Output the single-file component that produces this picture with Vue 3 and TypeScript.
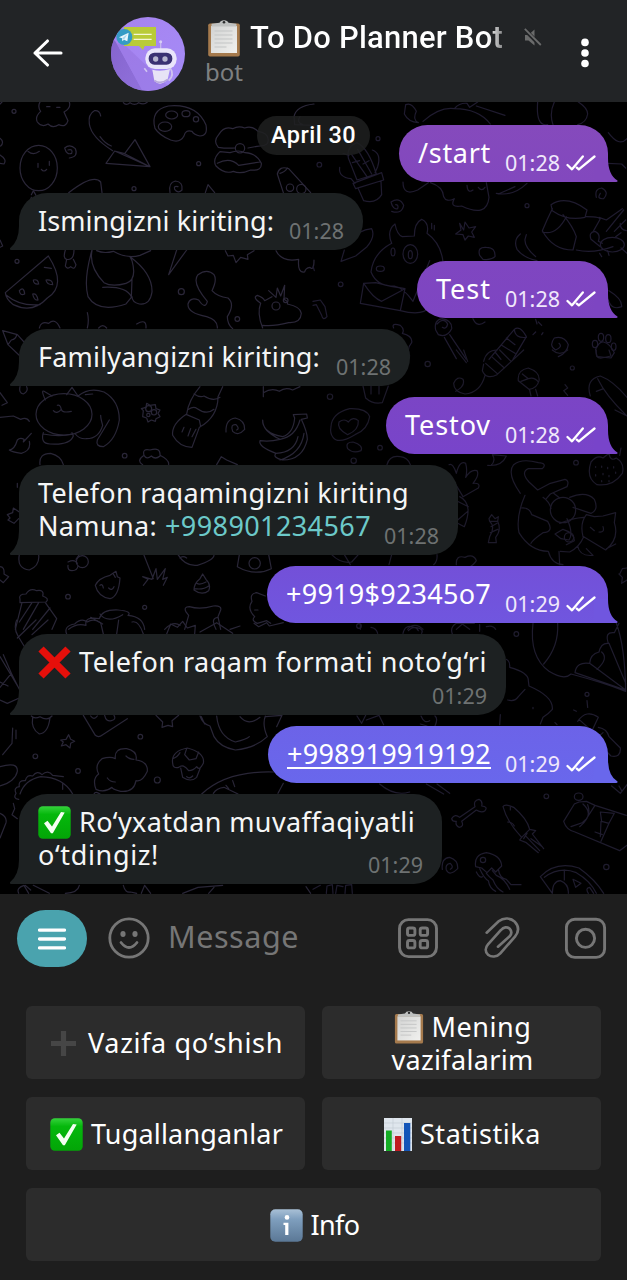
<script setup lang="ts">
type IconName = 'cross' | 'check' | 'clipboard' | 'chart' | 'info' | 'plus'
interface Segment { icon?: IconName; text?: string; w?: number; kind?: 'link' | 'underline' }
interface Message { out: boolean; width: number; height: number; time: string; lines: Segment[][]; fill?: [string, string] }
interface Key { wide?: boolean; lines: Segment[][] }

const messages: Message[] = [
  { out: true, width: 209, height: 57, time: '01:28', fill: ['#854abc', '#8248be'], lines: [[{ text: '/start', w: 73 }]] },
  { out: false, width: 344, height: 57, time: '01:28', lines: [[{ text: 'Ismingizni kiriting:', w: 236 }]] },
  { out: true, width: 191, height: 57, time: '01:28', fill: ['#7f46c0', '#7d45c2'], lines: [[{ text: 'Test', w: 55 }]] },
  { out: false, width: 391, height: 57, time: '01:28', lines: [[{ text: 'Familyangizni kiriting:', w: 282 }]] },
  { out: true, width: 222, height: 57, time: '01:28', fill: ['#7b45c5', '#7844ca'], lines: [[{ text: 'Testov', w: 86 }]] },
  {
    out: false, width: 439, height: 90, time: '01:28',
    lines: [[{ text: 'Telefon raqamingizni kiriting', w: 371 }], [{ text: 'Namuna:', w: 119 }, { text: '+998901234567', w: 206, kind: 'link' }]],
  },
  { out: true, width: 341, height: 57, time: '01:29', fill: ['#7350d8', '#7056df'], lines: [[{ text: '+9919$92345o7', w: 205 }]] },
  { out: false, width: 487, height: 81, time: '01:29', lines: [[{ icon: 'cross' }, { text: 'Telefon raqam formati noto‘g‘ri', w: 408 }]] },
  { out: true, width: 340, height: 57, time: '01:29', fill: ['#6c63e8', '#6967ec'], lines: [[{ text: '+998919919192', w: 204, kind: 'underline' }]] },
  {
    out: false, width: 423, height: 90, time: '01:29',
    lines: [[{ icon: 'check' }, { text: 'Ro‘yxatdan muvaffaqiyatli', w: 336 }], [{ text: 'o‘tdingiz!', w: 121 }]],
  },
]

const keys: Key[] = [
  { lines: [[{ icon: 'plus' }, { text: 'Vazifa qo‘shish', w: 195 }]] },
  { lines: [[{ icon: 'clipboard' }, { text: 'Mening', w: 100 }], [{ text: 'vazifalarim', w: 142 }]] },
  { lines: [[{ icon: 'check' }, { text: 'Tugallanganlar', w: 192 }]] },
  { lines: [[{ icon: 'chart' }, { text: 'Statistika', w: 121 }]] },
  { wide: true, lines: [[{ icon: 'info' }, { text: 'Info', w: 49 }]] },
]

// Spreads the letters of a label evenly so that it fills the given width.
const vFit = {
  mounted(el: HTMLElement, binding: { value?: number }) {
    if (!binding.value) return
    const natural = el.getBoundingClientRect().width
    const count = (el.textContent ?? '').trim().length
    el.style.letterSpacing = `${(binding.value - natural) / count}px`
  },
}
</script>

<template>
  <div class="screen">
    <svg class="defs" width="0" height="0">
      <defs>
        <linearGradient id="green" x1="0" y1="0" x2="0" y2="1"><stop offset="0" stop-color="#35d23c" /><stop offset=".25" stop-color="#05b80c" /><stop offset="1" stop-color="#03a507" /></linearGradient>
        <linearGradient id="blue" x1="0" y1="0" x2="0" y2="1"><stop offset="0" stop-color="#a9c0d6" /><stop offset=".3" stop-color="#7f9fbe" /><stop offset="1" stop-color="#5b7896" /></linearGradient>
        <linearGradient id="violet" x1="0" y1="0" x2="1" y2="1"><stop offset="0" stop-color="#a783ee" /><stop offset="1" stop-color="#a48bf8" /></linearGradient>
        <linearGradient id="shade" x1="0" y1="0" x2="1" y2="1"><stop offset="0" stop-color="#7c5cc4" /><stop offset="1" stop-color="#8c6bd6" /></linearGradient>
        <linearGradient id="paper" x1="0" y1="0" x2="1" y2="1"><stop offset="0" stop-color="#d2d3d2" /><stop offset="1" stop-color="#f1f1ef" /></linearGradient>
        <symbol id="cross" viewBox="0 0 33 33"><path d="M3 3 30 30M30 3 3 30" stroke="#e60f0a" stroke-width="7.4" fill="none" /></symbol>
        <symbol id="check" viewBox="0 0 33 33"><rect x=".3" y=".3" width="32.4" height="32.4" rx="4.5" fill="url(#green)" /><path d="M6 17.3 9.5 14.8 14 20.5 23 6 26.7 6.5 14.8 27.2 13 27.2Z" fill="#f4fff2" /></symbol>
        <symbol id="clipboard" viewBox="0 0 33 37">
          <rect x=".7" y="3.5" width="31.6" height="33" rx="1.8" fill="#a57a4d" /><rect x="3.5" y="6" width="26" height="27" fill="url(#paper)" />
          <path d="M4 3.8 12 2.8Q13 .2 16.5.2T21 2.8L29 3.8V6.5H4Z" fill="#bfc1c0" /><circle cx="16.5" cy="2.2" r="1.3" fill="#2b2c2c" />
          <path d="M7 11H25M7 15H25M7 19H25M7 23H25M7 27H19" stroke="#c3c5c5" stroke-width="1" />
        </symbol>
        <symbol id="chart" viewBox="0 0 28 33"><path d="M0 0H28V33H0Z" fill="#dfe6ed" /><path d="M0 5H28M0 10H28M0 15H28M0 20H28M0 25H28M9 0V33M18 0V33" stroke="#c4ccd6" stroke-width=".7" /><path d="M2 12.5H7.8V33H2Z" fill="#14ad25" /><path d="M11 18H17.2V33H11Z" fill="#c01a20" /><path d="M20 5H26.3V33H20Z" fill="#1355b8" /></symbol>
        <symbol id="info" viewBox="0 0 33 33"><rect x=".3" y=".3" width="32.4" height="32.4" rx="5" fill="url(#blue)" /><circle cx="17" cy="8.4" r="2.3" fill="#fff" /><path d="M13.5 13.7H18.4V26H15.2V16H13.5Z" fill="#fff" /></symbol>
        <symbol id="plus" viewBox="0 0 27 27"><path d="M13.5 1V26M1 13.5H26" stroke="#464646" stroke-width="5.2" fill="none" /></symbol>
      </defs>
    </svg>

    <header class="top">
      <svg class="back" width="32" height="30" viewBox="0 0 32 30"><path d="M29 15H3M15.5 3 3 15 15.5 27" fill="none" stroke="#fff" stroke-width="3.1" stroke-linecap="round" stroke-linejoin="round" /></svg>
      <svg class="avatar" width="74" height="74" viewBox="333 51 222 222">
        <clipPath id="round"><circle cx="444" cy="162" r="111" /></clipPath>
        <g clip-path="url(#round)">
          <path d="M333 51H555V273H333Z" fill="url(#violet)" />
          <path d="M347 125 428 273H333V110Z" fill="url(#shade)" opacity=".8" />
          <path d="M350 130 375 136 520 273H428Z" fill="#9673df" opacity=".55" />
          <path d="M372 81H468V138H434L429 150 417 138H372Z" fill="#b9cb38" />
          <path d="M401 103H455M401 118H455" stroke="#f5f8d6" stroke-width="4" />
          <circle cx="373" cy="111" r="24" fill="#359bc5" /><path d="M357 112 386 98 382 124 372 119 367 124 366 115Z" fill="#e8f6fd" /><path d="m366 115 16-12-10 16z" fill="#a9d6ec" />
          <path d="M482 125V148" stroke="#c6b9ee" stroke-width="4" /><circle cx="482" cy="125" r="4.5" fill="#d8cff5" />
          <path d="M441 215 433 205M510 203Q525 224 506 242" stroke="#cfc4f0" stroke-width="5" fill="none" />
          <rect x="436" y="145" width="94" height="62" rx="29" fill="#e9e5fa" /><rect x="446" y="158" width="71" height="36" rx="17" fill="#3a3173" />
          <circle cx="467" cy="177" r="8" fill="#b6b5cf" /><circle cx="495" cy="177" r="8" fill="#b6b5cf" />
          <path d="M457 209Q482 216 510 207L503 238Q482 261 463 243Z" fill="#e7e3f6" /><path d="M463 241Q482 255 503 238" fill="none" stroke="#b6a7db" stroke-width="5" />
        </g>
      </svg>
      <div class="who">
        <div class="title">
          <svg class="board" width="34" height="37"><use href="#clipboard" /></svg>
          <span v-fit="253" class="name">To Do Planner Bot</span>
        </div>
        <div class="sub">bot</div>
      </div>
      <svg class="mute" width="18" height="20" viewBox="0 0 18 20"><path d="M1 7H4.5L10.5 1.5V17.5L4.5 12.5H1Z" fill="#6a6b6b" /><path d="M.7 1.5 17 18" stroke="#222426" stroke-width="4" /><path d="M.8.8 16.8 17" stroke="#6a6b6b" stroke-width="1.8" /></svg>
      <svg class="more" width="10" height="32" viewBox="0 0 10 32"><g fill="#fff"><circle cx="5" cy="5.4" r="3.8" /><circle cx="5" cy="16" r="3.8" /><circle cx="5" cy="26.5" r="3.8" /></g></svg>
    </header>

    <main class="chat">
      <svg class="doodles" viewBox="0 102 627 792" width="627" height="792">
        <g transform="translate(0 100) scale(.33333)" stroke="#2b2739">
          <path d="M120 6Q112 20 122 34 104 50 112 66 126 84 144 72 158 86 176 74 198 84 204 62 196 46 192 36 214 24 208 6M140 20h10M170 22h10" />
          <circle cx="42" cy="34" r="6" /><circle cx="402" cy="266" r="6" /><circle cx="596" cy="191" r="6" /><circle cx="51" cy="484" r="6" /><circle cx="544" cy="575" r="9" /><circle cx="712" cy="657" r="7" />
          <path d="M302 48Q300 30 283 32 264 42 268 72 274 112 338 152M300 110Q316 132 334 138M318 190 344 153 374 161 405 119 450 200ZM344 153 450 200M374 161 450 200" />
          <path d="M465 85Q450 30 505 18 590 10 618 75 624 108 600 108 582 104 576 94 556 88 552 108 540 130 512 120 478 106 465 85Z" /><ellipse cx="515" cy="45" rx="18" ry="12" /><ellipse cx="558" cy="41" rx="12" ry="9" /><ellipse cx="495" cy="80" rx="20" ry="14" /><circle cx="588" cy="58" r="8" />
          <path d="M655 142Q638 124 656 104 672 76 698 86 716 76 734 84 756 76 774 94 802 98 804 116 808 138 780 138 762 140 744 144M655 142Q680 146 705 144M660 155Q636 178 648 198 674 224 700 214 722 224 752 210 786 214 784 190 770 160 735 158 716 148 690 158ZM652 190Q690 170 716 196 754 190 780 186" /><circle cx="720" cy="145" r="14" />
          <ellipse cx="116" cy="204" rx="56" ry="68" /><path d="M84 154Q100 168 118 154M114 190v12M148 184v12M124 208Q132 218 140 208M94 284 100 272 108 286M94 292Q84 320 92 340" />
          <path d="M194 144Q200 166 215 160 220 146 204 150M194 144Q210 130 226 146 236 170 208 174M206 278Q280 220 302 246L306 278M510 278Q504 248 526 243 550 246 546 270 534 282 524 268 520 256 534 260M616 278 624 254 644 278" />
          <path d="M832 222Q838 196 866 206L932 278M832 222 850 278M840 220Q855 216 862 204" /><circle cx="870" cy="263" r="11" /><circle cx="904" cy="267" r="14" /><path d="M942 12Q888 18 882 50L884 74 942 76M900 50Q888 66 908 74" />
          <path d="M0 115Q14 126 2 138M0 165Q22 178 12 192L0 190M0 420 8 438 0 442M0 12 6 6M370 8Q378 18 390 8 404 18 416 8 432 16 442 6" />
          <path d="M16 578 145 468Q202 556 142 594 98 642 40 614 18 598 16 578ZM18 585Q60 620 120 614M133 502 154 505M58 572q14-14 16 10-14 6-16-10ZM100 540q14-4 16 12-16 2-16-12ZM98 582q12-4 16 18-12 2-16-18ZM138 540q20-2 20 14-18 0-20-14Z" />
          <path d="M196 450Q188 476 200 478 222 482 222 450M200 478 196 498Q202 510 212 500 224 512 228 494L220 478M276 450Q250 540 264 590 294 640 378 612L394 592 396 538M276 452Q266 500 312 548 336 562 378 550 412 540 396 482L390 470Q458 520 456 576 450 616 418 612 396 606 396 590M308 562Q378 558 394 590M290 452Q312 462 340 454 382 478 420 466L452 452" />
          <path d="M530 450 506 524 560 450M676 452 684 468 700 466 708 488 722 472 744 478 742 464 762 452M828 452Q846 488 896 478 892 520 914 516 916 504 930 502 942 514 942 480M652 684Q654 660 620 650 562 640 564 612 570 590 596 600 616 630 622 604 574 548 594 524 622 504 642 524 652 540 636 572 652 590 684 594 706 612 682 650 682 672 698 686" />
          <path d="M788 684Q770 640 782 610 756 592 772 586 790 592 794 602L816 590M806 572 828 592 832 564 842 588 854 556 852 598Q866 604 862 612 902 620 904 640 902 670 866 668 820 680 788 676" /><circle cx="828" cy="618" r="12" /><circle cx="857" cy="601" r="7" />
          <path d="M8 692 52 704 94 750M8 692 24 734 60 768M50 704Q48 718 34 720L24 734M118 684Q122 662 146 670 166 652 180 684M262 638Q268 660 262 684M296 684q12-14 24 0M410 672Q440 654 438 684" />
        </g>
        <g transform="translate(313 100) scale(.33333)" stroke="#1f1b2f">
          <path d="M278 14Q296 6 310 34 298 60 316 68 286 66 274 42ZM330 64Q380 20 424 26 496 26 532 72M426 24Q440 8 462 10L470 22 494 6M490 18 576 46M674 6Q668 80 704 74M796 6Q824 24 824 42 820 68 794 74M724 6Q708 40 720 74" />
          <path d="M270 246Q270 290 314 270L346 248M352 248Q390 260 392 290 400 308 424 296 408 324 446 318 522 354 528 292L520 248M462 256Q464 282 480 270M496 262Q506 276 516 262M550 280Q600 290 642 250M556 282 606 260" />
          <circle cx="195" cy="116" r="6" /><circle cx="19" cy="194" r="7" /><circle cx="642" cy="317" r="6" /><circle cx="83" cy="553" r="7" />
          <path d="M106 174Q100 140 132 128 166 144 190 222L132 240ZM116 164 162 230M134 148 176 222M80 202Q76 232 114 236L126 250M178 150Q206 160 194 200L186 218M120 250 206 218 212 240 128 266ZM136 266 152 302Q190 312 206 284L204 244M90 160 108 166M118 188 140 182M150 192 168 182" />
          <path d="M234 306Q240 330 254 326 258 314 248 314M234 306Q260 290 272 316 266 344 236 334M440 370 452 390 456 366 468 384 488 380 476 396 484 412 466 408 456 420 450 404 428 402 444 390Z" />
          <path d="M236 430Q220 392 246 372 252 404 268 410L304 408Q304 368 326 358 350 370 342 400 384 430 390 486M236 430Q180 460 174 516 192 560 244 558 270 562 300 604L350 482M152 550 188 548Q230 560 276 566L262 632 142 610ZM152 550Q180 594 206 604L276 566M262 632Q330 650 350 620M356 370v16M364 376v14" /><ellipse cx="292" cy="462" rx="22" ry="28" /><ellipse cx="240" cy="456" rx="6" ry="12" /><ellipse cx="292" cy="464" rx="6" ry="12" /><ellipse cx="202" cy="506" rx="12" ry="8" />
          <path d="M500 466Q492 440 520 442 548 442 546 470 532 482 510 478ZM622 402Q600 420 612 448 632 474 672 482M640 404 636 418Q634 440 668 470M714 314Q760 284 822 330L816 352Q764 364 718 332ZM718 326 702 360 688 392Q720 450 780 450L790 410Q780 380 750 344M688 396Q730 408 760 350M790 450Q840 462 900 440M820 350Q868 350 860 360L842 392M858 352 880 360 928 326M880 394 932 330M904 394 938 360" />
          <ellipse cx="898" cy="434" rx="36" ry="22" /><path d="M862 440 834 418Q826 396 846 394 864 402 856 424L868 430M908 410 924 398M940 392Q920 388 922 370M860 460 866 470M884 452 888 466M924 444 942 460M850 292Q844 266 866 264 890 276 872 296 850 298 862 280M886 98Q918 142 942 116M884 190 926 192 938 204M0 498 4 512M0 604 22 600 36 620 42 650Q30 664 26 646L10 614 0 616M118 420Q136 390 176 386 188 408 162 440L128 468 84 484 94 450" />
          <path d="M368 690Q362 660 388 656 418 662 416 686 402 714 376 704ZM372 672Q392 650 404 672 400 690 388 682M394 712 430 776M410 704 460 778M528 778 604 688Q620 674 640 710L600 778M604 688Q606 716 640 712M566 736 606 760M546 756 564 778M580 714 606 734M480 656Q492 684 516 666M660 704 668 696M676 666 686 676M668 658 672 672M690 698 686 704" />
          <path d="M736 770Q762 760 766 734 754 706 724 714 706 738 728 750 750 740 738 730M848 748Q860 722 872 726 892 732 904 758L894 774 852 770ZM888 572Q928 596 926 620 896 632 886 600M242 684Q234 668 262 676 276 688 268 700 300 708 296 728 280 746 290 768" /><ellipse cx="846" cy="732" rx="8" ry="11" /><ellipse cx="864" cy="712" rx="8" ry="12" /><ellipse cx="886" cy="716" rx="8" ry="12" /><ellipse cx="902" cy="740" rx="7" ry="11" />
        </g>
        <g transform="translate(0 350) scale(.33333)" stroke="#292637">
          <ellipse cx="192" cy="193" rx="84" ry="62" /><path d="M136 150Q122 118 132 124L156 138M200 134 216 112 234 138Q268 110 312 126 358 152 358 210 348 270 310 290 286 290 292 270L328 210M256 134 278 132M160 182Q170 194 184 178 180 162 172 166M184 178Q186 190 214 184M130 248Q120 280 150 282 210 286 220 258L216 248M130 252Q180 262 216 252M226 252Q238 268 260 266 296 266 308 226 302 206 302 196" />
          <path d="M430 182 424 176 438 172 440 160 450 166 466 164 468 176 480 180 474 190 480 200 468 206 466 214 454 210 444 216 440 204 428 200Z" /><circle cx="446" cy="176" r="9" /><circle cx="462" cy="187" r="8" /><circle cx="445" cy="195" r="5" />
          <path d="M60 110Q56 130 70 132 86 124 80 110M0 128 22 158 6 166M0 202 40 198 62 208Q80 200 88 214M28 300Q44 298 52 270 60 262 72 268L70 276 94 250M88 274Q94 302 64 310 36 306 28 300M120 344Q116 310 152 310 184 318 190 344" />
          <path d="M600 110Q566 150 560 192 514 222 518 256 538 292 576 292L598 232Q654 200 654 140L668 110M582 132Q600 144 612 138 640 156 660 142M566 178Q580 168 592 176 620 196 642 178M560 194 598 210 602 230M552 232 546 246M572 236 564 258M588 238 576 260" />
          <path d="M678 246Q676 208 706 204 736 212 734 238 714 260 698 244 690 222 708 224 720 236 710 240" /><circle cx="374" cy="317" r="7" />
          <path d="M788 210Q788 250 848 260 880 250 884 204L880 194 920 192 922 204 904 208Q922 246 922 268 908 330 848 330 816 322 828 310 774 290 780 272 810 276 840 268 786 242 788 210ZM828 310Q884 308 894 260M840 268Q886 260 900 210M840 330Q904 310 912 250M790 140V110M790 128Q816 112 838 124 856 110 878 120L900 110" />
          <path d="M428 344Q408 332 432 316 426 294 450 300 482 290 480 316 508 330 506 344M432 316Q440 330 454 318 466 330 480 318M650 344 664 320 680 330 712 344M22 494 38 488 40 474 58 486M24 510 42 520 56 506M22 494 30 504 24 510M52 400v12" />
          <path d="M58 614Q50 656 88 660 120 648 116 614M0 650Q14 650 12 672L26 680 10 698 0 690M204 636Q224 626 232 640M204 646Q202 662 216 662 232 662 234 648M238 614 228 628" /><circle cx="247" cy="635" r="18" />
          <path d="M286 706Q296 684 330 676L348 664 352 680 360 684Q356 740 330 746 294 740 286 706ZM300 706Q308 700 310 714M326 714Q336 724 342 710M340 672 346 682M432 616 460 686M430 706 444 688 428 680 456 688 468 656 472 688 496 656 488 688 502 682 490 706" />
          <path d="M534 614Q556 650 592 646 644 630 642 614M540 624Q548 616 560 624M582 720Q582 700 600 686L608 672 618 688Q634 704 626 722 606 738 582 720ZM590 700Q600 706 618 696M584 716Q610 720 626 708M718 614 712 650Q766 680 814 656L806 614" /><circle cx="764" cy="640" r="17" /><circle cx="204" cy="740" r="7" /><circle cx="434" cy="772" r="6" />
          <path d="M60 748Q54 732 78 732 90 712 110 722 134 718 128 738 150 746 138 756L60 758ZM66 758 46 838M136 758 170 806 156 838M96 758 58 816M116 758 70 838M150 774 98 838M206 838Q230 818 258 826 252 798 298 806 306 778 354 780 398 784 384 796 430 800 434 838M272 802 308 822M300 792Q322 822 368 794" />
          <path d="M558 786Q550 770 568 770 600 780 640 768 666 766 662 780L654 800 662 838M558 786 566 796 554 838M654 802Q630 804 648 838M540 826Q520 812 494 838M690 838 720 828M756 754Q748 730 770 728L796 738M756 754Q740 776 764 800 752 812 772 820L800 812 812 820M764 780h10" />
        </g>
        <g transform="translate(313 350) scale(.33333)" stroke="#1d1a2a">
          <path d="M430 0 460 38M452 0 464 34M512 34Q520 0 552 0M512 42 508 62Q520 90 552 74L632 0M518 40 552 70M536 20 574 54M560 0 594 34M516 76Q502 128 456 132 422 126 422 100 432 76 450 88 458 108 428 124M650 120 654 138M668 118 674 138M616 92Q612 60 646 54 682 66 678 92 672 116 648 118ZM628 72 646 86 624 94M646 86Q664 80 676 96M718 0Q740 20 764 0M850 0Q846 26 866 24L894 18 888 0M756 104 764 114 752 122 764 136M832 138Q816 88 862 78 900 92 942 142M850 124 872 116M854 86Q878 136 940 196M942 198 906 180" />
          <path d="M54 230Q56 190 110 176 160 174 170 200 164 240 126 254 76 284 60 262 50 250 54 230ZM104 254Q70 236 78 216 94 204 106 216 120 198 136 212 138 240 104 254ZM104 296Q96 276 120 276 152 286 144 302 120 312 104 296ZM150 108 158 144Q180 164 208 158L226 108M174 108v24M198 108v24M222 344Q230 314 262 320 284 322 292 344M524 346Q566 350 580 318L538 314Q550 332 534 346" />
          <circle cx="344" cy="42" r="8" /><circle cx="51" cy="140" r="8" /><circle cx="201" cy="293" r="7" /><circle cx="122" cy="332" r="8" /><circle cx="789" cy="338" r="7" /><circle cx="778" cy="54" r="6" />
          <path d="M408 344Q420 338 430 370 440 330 458 340 464 362 458 382 474 356 492 362 500 376 480 400 504 398 496 414L450 440 414 380M440 440Q482 460 454 530L434 520M426 450 466 470M434 510 464 484" />
          <path d="M622 430Q580 370 602 344 626 324 676 338 704 340 688 356L646 356Q622 366 648 396L674 420 712 400 756 388Q770 392 762 410L712 432 700 446M636 436Q608 500 618 548 652 604 706 604 716 642 750 644M626 474Q650 472 656 494L704 514Q724 546 690 548 658 570 654 580M690 442Q710 456 714 476M740 444 722 430M770 442Q820 422 844 448 858 480 834 490L780 472M740 520Q780 504 812 502M810 560Q800 520 820 494L844 500 870 498 908 488 904 518Q920 566 878 600L812 560M832 532 844 542M858 546Q876 548 870 530M812 560Q800 590 770 606L742 604M762 506Q782 550 768 570L744 566 726 552 750 538Q784 548 784 572L760 584M880 596 908 582M794 588Q800 620 840 616L820 596" /><circle cx="750" cy="480" r="38" /><circle cx="768" cy="562" r="14" />
          <path d="M528 506 536 494 546 506 556 500 554 514 530 514ZM530 514Q548 530 530 560M554 514Q566 540 548 562M530 560 526 578 550 578 548 562M534 530 552 520M532 548 554 538M834 336Q818 384 852 404 900 410 928 370 936 340 910 324 892 336 888 310L870 324Q852 314 834 336ZM924 294 920 316M848 350v2M866 348v4M884 352v4M902 350v4M848 374v4M870 370v4M888 376v4M908 366v4M866 392v3M888 392v3" />
          <path d="M430 644Q428 614 456 622 482 610 490 632 482 646 464 654M56 614Q84 642 116 636L136 614M94 614 112 644M236 614 228 644M372 614Q374 634 362 644M920 672 928 656 942 654M918 672 928 682 926 700 942 690M738 604 740 644M284 838Q298 820 320 830L330 838M430 838 448 822 470 838M142 824v14M520 830Q540 824 548 838" />
        </g>
        <g transform="translate(0 620) scale(.33333)" stroke="#292637">
          <path d="M50 0Q40 24 54 48L72 78M108 0 52 54M144 0 96 44M0 110 54 200M10 104 34 160 0 202M0 240 22 250 58 234M34 160 58 208M0 186 24 198M200 42Q190 18 224 12 244-8 262 6 280-6 302 8L310 42M350 42 356 0M430 42Q416 0 396 6M500 42 512 12 532 22 548 4 562 24 586 16 584 42M600 36 650 8 698 40M762 10 776 20 800 8 808 18 850 8" />
          <path d="M94 288Q104 298 120 290 142 304 156 288M98 292Q92 326 118 342 144 340 150 294M38 324 36 370 8 404M48 330v26M250 286 286 346Q296 354 308 344L382 296M272 288q10 14 20 0M314 286Q318 306 334 302 350 298 342 286" />
          <path d="M182 360 198 358 206 344 212 358 224 364 212 370 210 384 198 374 184 378 190 366ZM468 286 488 306 486 322 504 316 518 320 516 302 536 286M600 288Q608 312 630 318L642 350Q660 382 706 390 766 384 802 350 786 314 796 288M604 290 614 312M650 288Q656 350 706 366 740 358 748 350M796 290 846 286 830 320M720 290Q744 320 780 292" />
          <path d="M296 462Q282 436 306 416 332 408 346 416 342 384 380 386 414 394 408 420 444 424 442 454 426 488 408 482 402 518 362 514 336 508 336 502 314 520 288 508 276 476 296 462ZM378 408Q388 418 402 418M322 474Q330 486 346 486M518 430Q512 394 562 384 616 398 610 430 598 454 590 440 580 452 566 452 550 430 536 442 518 446 518 430ZM540 398Q532 412 518 416M560 386 554 404 568 420 588 416 596 396M542 444 548 472Q572 488 590 472L600 446M560 470Q568 478 578 468" />
          <circle cx="106" cy="409" r="7" /><circle cx="421" cy="350" r="7" /><circle cx="234" cy="453" r="7" /><circle cx="472" cy="480" r="9" />
          <path d="M60 522Q74 480 122 470 190 472 218 522M56 538Q38 536 48 520 40 502 58 500 54 480 76 482 80 462 98 468 112 450 126 464 144 448 158 466L190 470M188 490v18M0 440Q54 424 52 454 46 484 0 498M0 580Q22 590 18 608L0 654M40 550 44 566 36 584 52 596M282 522Q286 512 300 522M605 522Q680 452 820 456M640 520Q650 504 672 502L714 522M678 496 686 506M698 482 704 500M850 490 834 520" />
          <path d="M56 820Q48 804 72 796L86 820M76 796 92 810M100 796 148 820M196 820Q234 818 238 796M370 796Q376 820 392 816L410 820M424 820 434 796 452 820M548 820 594 802 668 796M626 820 642 802M918 800 932 820" />
        </g>
        <g transform="translate(313 620) scale(.33333)" stroke="#1f1c2e">
          <path d="M660 10Q648 110 708 154 754 182 774 162 872 188 938 214M734 10Q738 80 692 132M910 10Q936 80 938 214M830 130Q790 124 786 158L938 210M830 130Q832 102 858 96 864 68 886 70 874 34 904 38L918 10M830 130 938 210M888 70 938 190M866 96Q888 116 852 148" />
          <circle cx="610" cy="42" r="7" /><circle cx="822" cy="223" r="6" /><circle cx="700" cy="529" r="7" /><circle cx="880" cy="741" r="8" /><circle cx="138" cy="18" r="7" />
          <path d="M580 118Q592 124 590 142 648 158 646 182L648 198Q722 230 718 268 708 280 690 292L682 312M562 284 560 314M584 240Q606 246 616 230L636 208M660 262v4M822 242 824 262M782 270l8 4M726 308l6 6M794 304Q820 266 856 292L838 330 814 326M856 322Q882 326 888 350L922 384Q924 414 894 408L870 384M870 338 854 352M798 298 838 334" />
          <path d="M132 288 146 310 158 286M160 300 198 286 212 314M324 288Q334 312 350 302M366 288Q376 296 366 318M322 312 342 318M270 40Q276 12 302 22 334 24 326 40M286 32q20-20 30 0M174 22Q190 24 194 40M500 14v20M418 42Q410 22 430 10L484 10M200 492Q244 530 290 516M340 492 392 522M372 492 410 520" />
          <path d="M416 596Q426 580 440 592L486 560Q480 542 498 538 510 544 506 558 526 560 516 572 506 580 490 570L446 604Q454 620 438 622 426 616 430 604 418 606 416 596ZM570 560Q576 550 602 562 642 596 650 628L626 652Q582 606 570 560ZM584 606Q598 606 604 618M626 652 620 660 640 668 676 698M650 628 668 632 658 642 692 686M640 650 680 692M654 656 688 680M632 656 642 640M592 562v8" />
          <ellipse cx="797" cy="530" rx="13" ry="11" /><path d="M784 552 798 546 820 544 846 556M784 552 752 604Q760 630 786 636L920 692 942 676M846 556 940 586M846 556 814 606 774 620M810 552Q842 582 810 606M824 554Q838 590 800 620M862 576 904 580 888 610 866 604ZM888 610 864 664M864 604 862 650M846 636 868 644M896 498 922 520 942 494M918 498 926 512" />
          <path d="M488 740Q482 704 520 698 564 706 566 738L548 756 536 744 522 758 506 744ZM500 746Q514 776 526 782 530 806 548 814M520 760Q530 772 540 780 550 806 570 816M538 752 550 766Q576 776 590 808M556 748Q560 774 580 778L594 794 624 794M490 756Q500 776 508 770M388 748Q384 714 410 712 436 720 434 746 410 770 400 750 396 732 412 730 424 742 412 748M682 770Q728 722 798 744 846 778 872 820M682 770 718 820M694 772Q740 738 790 758 832 782 850 820M754 750V780M780 778 804 790 788 802ZM718 820Q718 784 742 782 768 792 766 820M826 820Q816 804 830 802L842 820" />
          <circle cx="510" cy="720" r="8" /><path d="M40 820 42 798 58 794 60 820M68 820 72 796 90 800M96 820 98 796 116 794 118 820M0 808 22 796" />
        </g>
      </svg>

      <div class="date"><span v-fit="85">April 30</span></div>

      <div v-for="(m, i) in messages" :key="i" class="row" :class="{ out: m.out }">
        <div
          class="bubble"
          :style="{
            width: m.width + 'px',
            height: m.height + 'px',
            background: m.fill ? `linear-gradient(${m.fill[0]}, ${m.fill[1]})` : undefined,
          }"
        >
          <svg v-if="m.out" class="tail" width="24" height="24" viewBox="0 0 24 24"><path d="M0 0H14Q14 17 23.5 22.5 24 24 22 24H0Z" :fill="m.fill?.[1]" /></svg>
          <svg v-else class="tail" width="24" height="24" viewBox="0 0 24 24"><path d="M24 0H10Q10 15 1 22.3 .4 24 2 24H24Z" fill="#1d2122" /></svg>
          <div class="body">
            <div v-for="(line, l) in m.lines" :key="l" class="line">
              <template v-for="(s, k) in line" :key="k">
                <svg v-if="s.icon" class="emoji" width="33" height="33"><use :href="'#' + s.icon" /></svg>
                <span v-else v-fit="s.w" :class="s.kind">{{ s.text }}</span>
              </template>
            </div>
          </div>
          <div class="meta">
            <span v-fit="55">{{ m.time }}</span>
            <svg v-if="m.out" width="30" height="17" viewBox="0 0 30 17"><path d="M1.5 10 6 14.3 16.8 1.5M10.8 12.6 12.8 14.3 28.5 1.5" fill="none" stroke="#fff" stroke-width="2.3" stroke-linecap="round" stroke-linejoin="round" /></svg>
          </div>
        </div>
      </div>
    </main>

    <section class="composer">
      <div class="menu"><svg width="28" height="22" viewBox="0 0 28 22"><path d="M1.5 2.2H26.5M1.5 11H26.5M1.5 19.8H26.5" stroke="#fff" stroke-width="3.3" stroke-linecap="round" /></svg></div>
      <svg class="smile" width="42" height="42" viewBox="0 0 42 42"><g fill="none" stroke="#767676" stroke-width="2.8" stroke-linecap="round"><circle cx="21" cy="21" r="19.2" /><path d="M13 25.5Q21 35.5 29 25.5" /></g><ellipse cx="15" cy="17" rx="2.6" ry="3" fill="#767676" /><ellipse cx="27" cy="17" rx="2.6" ry="3" fill="#767676" /></svg>
      <div class="placeholder"><span v-fit="131">Message</span></div>
      <svg class="grid" width="42" height="42" viewBox="0 0 42 42"><g fill="none" stroke="#767676" stroke-width="2.9"><rect x="2.5" y="2.6" width="37" height="37" rx="9" /><rect x="10.5" y="11" width="7.4" height="7.4" rx="2" /><rect x="23.2" y="11" width="7.4" height="7.4" rx="2" /><rect x="10.5" y="23.5" width="7.4" height="7.4" rx="2" /><rect x="23.2" y="23.5" width="7.4" height="7.4" rx="2" /></g></svg>
      <svg class="clip" width="42" height="42" viewBox="504 84 126 126"><path d="M521 131 557 97C573 84 594 87 605 98 618 112 618 128 606 143L562 193C551 205 535 205 525 197 516 188 516 176 525 166L564 123C572 113 583 113 590 119 597 127 596 135 590 142L555 173" fill="none" stroke="#767676" stroke-width="8" stroke-linecap="round" /></svg>
      <svg class="camera" width="42" height="42" viewBox="0 0 42 42"><g fill="none" stroke="#767676" stroke-width="2.9"><rect x="1.4" y="2.2" width="38.2" height="38.2" rx="8.5" /><circle cx="20.5" cy="21.3" r="9.1" /></g></svg>
    </section>

    <section class="keyboard">
      <div v-for="(key, i) in keys" :key="i" class="key" :class="{ wide: key.wide }">
        <div v-for="(line, l) in key.lines" :key="l" class="line">
          <template v-for="(s, k) in line" :key="k">
            <svg v-if="s.icon" class="emoji" :class="s.icon" :width="s.icon === 'chart' ? 28 : s.icon === 'plus' ? 27 : s.icon === 'clipboard' ? 30 : 33" height="33"><use :href="'#' + s.icon" /></svg>
            <span v-else v-fit="s.w">{{ s.text }}</span>
          </template>
        </div>
      </div>
    </section>
  </div>
</template>

<style>
body { margin: 0; background: #000; }
</style>

<style scoped>
.screen { width: 627px; height: 1280px; overflow: hidden; display: flex; flex-direction: column; background: #1e1e1e; color: #fff; font-family: "Noto Sans", "Open Sans", sans-serif; }
.screen span { white-space: nowrap; }
.defs { position: absolute; }
svg { display: block; flex: none; }
.top { height: 102px; flex: none; background: #222426; display: flex; align-items: flex-start; }
.back { margin: 38px 0 0 32px; }
.avatar { margin: 17px 0 0 47px; }
.who { margin: 18px 0 0 22px; width: 305px; }
.title { display: flex; height: 38px; gap: 9px; }
.board { margin-top: 2px; }
.name { font: 500 31px/38px Roboto, sans-serif; background: linear-gradient(90deg, #fff 238px, #6a6b6c 256px); -webkit-background-clip: text; background-clip: text; color: transparent; padding-top: 1px; }
.sub { font: 24px/33px "Noto Sans", sans-serif; color: #7e8081; margin: -1px 0 0 -2px; }
.mute { margin: 28px 0 0 12px; }
.more { margin: 37px 0 0 38px; }
.chat { height: 769px; flex: none; padding-top: 23px; position: relative; background: #000; display: flex; flex-direction: column; gap: 11px; overflow: hidden; }
.doodles { position: absolute; left: 0; top: 0; }
.doodles g { fill: none; stroke-width: 3.6; stroke-linecap: round; stroke-linejoin: round; }
.date { position: absolute; left: 257px; top: 14px; width: 113px; height: 39px; border-radius: 20px; background: rgba(30, 32, 32, .85); display: flex; justify-content: center; font: 500 23.5px/39px Roboto, sans-serif; }
.row { display: flex; padding: 0 19px; flex: none; position: relative; }
.row.out { justify-content: flex-end; }
.bubble { position: relative; box-sizing: border-box; display: grid; padding: 11px 19px 0; background: #1d2122; border-radius: 28px 28px 28px 0; font-size: 27px; color: #f5f6f6; }
.out .bubble { border-radius: 28.5px 28.5px 0 28.5px; padding-right: 12px; color: #fff; }
.tail { position: absolute; bottom: 0; left: -10px; }
.out .tail { left: auto; right: -10px; }
.body, .meta { grid-area: 1 / 1; position: relative; }
.line { display: flex; height: 33px; line-height: 33px; }
.emoji { margin: 1px 8px 0 0; }
.link { color: #6cc9c9; margin-left: 8px; }
.underline { text-decoration: underline; text-decoration-thickness: 1.6px; text-underline-offset: 3px; text-decoration-skip-ink: none; }
.meta { align-self: end; justify-self: end; display: flex; align-items: flex-end; gap: 6px; font-size: 21.5px; line-height: 26px; margin-bottom: 6px; color: #6e7272; font-weight: 400; }
.out .meta { color: #f0e8fb; }
.meta svg { margin-bottom: 4px; }
.composer { height: 73px; flex: none; display: flex; align-items: flex-start; padding-top: 16px; }
.menu { width: 70px; height: 57px; margin-left: 17px; border-radius: 28.5px; background: #4aa3ae; display: flex; align-items: center; justify-content: center; }
.smile { margin: 7px 0 0 21px; }
.placeholder { width: 229px; margin: 8px 0 0 18px; font-size: 30.5px; line-height: 36px; color: #767676; }
.grid { margin: 7px 0 0 0; }
.clip { margin: 7px 0 0 42px; }
.camera { margin: 7px 0 0 42px; }
.keyboard { display: grid; grid-template-columns: 279px 279px; grid-auto-rows: 73px; gap: 18px 17px; padding: 23px 26px 0; }
.key { background: #2c2c2c; border-radius: 6px; display: flex; flex-direction: column; align-items: center; justify-content: center; font-size: 27px; }
.key.wide { grid-column: 1 / 3; }
.key .plus { margin-right: 11px; }
.key .line { padding-left: 2px; }
</style>
